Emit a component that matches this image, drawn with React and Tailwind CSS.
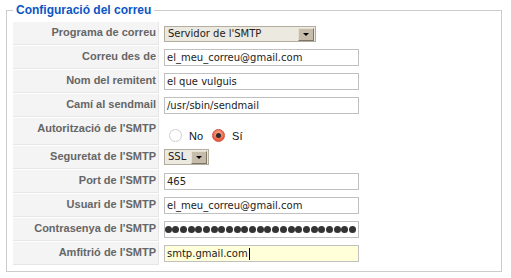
import React from "react";

const rows = [
  { label: "Programa de correu", type: "select", value: "Servidor de l'SMTP" },
  { label: "Correu des de", type: "text", value: "el_meu_correu@gmail.com" },
  { label: "Nom del remitent", type: "text", value: "el que vulguis" },
  { label: "Camí al sendmail", type: "text", value: "/usr/sbin/sendmail" },
  { label: "Autorització de l'SMTP", type: "radio" },
  { label: "Seguretat de l'SMTP", type: "ssl", value: "SSL" },
  { label: "Port de l'SMTP", type: "text", value: "465" },
  { label: "Usuari de l'SMTP", type: "text", value: "el_meu_correu@gmail.com" },
  { label: "Contrasenya de l'SMTP", type: "password" },
  { label: "Amfitrió de l'SMTP", type: "text", value: "smtp.gmail.com", focused: true },
];

function SelectBox({ value, width }) {
  return (
    <div
      className={`${width} h-[16px] flex items-center justify-between border border-[#b3ad9f] bg-[#ece9e0] pl-[3px] pr-[1px] text-[10px] leading-[14px] text-[#222]`}
    >
      <span className="whitespace-nowrap">{value}</span>
      <span className="h-[13px] w-[16px] flex items-center justify-center bg-[#c6bca9] border-r border-b border-[#7d7566] border-t border-l border-t-[#e6e0d4] border-l-[#e6e0d4]">
        <span className="block w-0 h-0 border-l-[3px] border-r-[3px] border-t-[3px] border-l-transparent border-r-transparent border-t-black" />
      </span>
    </div>
  );
}

function TextBox({ value, focused }) {
  return (
    <div
      className={`w-[195px] h-[17px] flex items-center border border-[#c0c0c0] px-[2px] text-[10px] leading-[14px] text-[#222] whitespace-nowrap ${
        focused ? "bg-[#ffffd9]" : "bg-white"
      }`}
    >
      {value}
      {focused && <span className="inline-block w-px h-[12px] bg-black ml-px" />}
    </div>
  );
}

function PasswordBox() {
  const dots = Array.from({ length: 26 });
  return (
    <div className="w-[195px] h-[17px] flex items-center justify-end overflow-hidden border border-[#c0c0c0] bg-white pr-[2px]">
      {dots.map((_, i) => (
        <span key={i} className="shrink-0 w-[7px] h-[7px] rounded-full bg-[#333] ml-[0.7px]" />
      ))}
    </div>
  );
}

function Radios() {
  return (
    <div className="flex items-center pt-[6px] text-[11px] leading-[13px] text-[#111] font-['Liberation_Sans',Arial,sans-serif]">
      <span className="ml-[5px] w-[13px] h-[13px] rounded-full border border-[#cfcfcf] bg-white" />
      <span className="ml-[7px] mt-[3px]">No</span>
      <span className="ml-[9px] w-[13px] h-[13px] rounded-full border border-[#d0503a] bg-[radial-gradient(circle_at_50%_35%,#ffb09a,#ee5a3e_70%)] flex items-center justify-center">
        <span className="w-[5px] h-[5px] rounded-full bg-[#2a2a2a]" />
      </span>
      <span className="ml-[7px] mt-[3px]">Sí</span>
    </div>
  );
}

export default function App() {
  return (
    <div className="w-[511px] h-[278px] bg-white overflow-hidden pt-[3px]">
      <fieldset className="ml-[6px] w-[496px] border border-[#cccccc] pl-[6px] pr-[6px] pt-[5px] pb-[6px]">
        <legend className="px-[3px] text-[12px] leading-[14px] font-bold text-[#0b55c4] font-['Liberation_Sans',Arial,sans-serif]">
          Configuració del correu
        </legend>
        <div className="flex flex-col gap-[1px]">
          {rows.map((r) => (
            <div key={r.label} className={`flex ${r.type === "radio" ? "h-[27px]" : "h-[23px]"}`}>
              <div className="w-[146px] shrink-0 bg-[#f4f4f4] border-b border-r border-[#e6e6e6] pt-[4px] pr-[2px] text-right text-[11px] leading-[13px] font-bold text-[#666] font-['Liberation_Sans',Arial,sans-serif] whitespace-nowrap">
                {r.label}
              </div>
              <div
                className={`pl-[5px] font-['DejaVu_Sans',sans-serif] ${
                  r.type === "select" ? "pt-[4px]" : "pt-[3px]"
                }`}
              >
                {r.type === "select" && <SelectBox value={r.value} width="w-[152px]" />}
                {r.type === "ssl" && <SelectBox value={r.value} width="w-[45px]" />}
                {r.type === "text" && <TextBox value={r.value} focused={r.focused} />}
                {r.type === "password" && <PasswordBox />}
                {r.type === "radio" && <Radios />}
              </div>
            </div>
          ))}
        </div>
      </fieldset>
    </div>
  );
}
